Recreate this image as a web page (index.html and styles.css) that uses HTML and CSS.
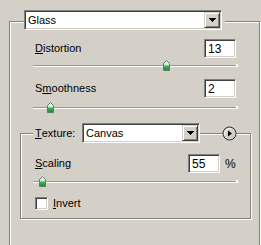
FILE: index.html
```html
<!DOCTYPE html>
<html>
<head>
<meta charset="utf-8">
<link rel="stylesheet" href="styles.css">
</head>
<body>
<div class="outer">
  <div class="legend-wrap">
    <div class="combo combo-glass">
      <span class="combo-text">Glass</span>
      <span class="combo-btn"><svg width="7" height="4" viewBox="0 0 7 4" shape-rendering="crispEdges"><path d="M0 0h7v1h-1v1h-1v1h-1v1h-1v-1h-1v-1h-1v-1h-1z" fill="#000"/></svg></span>
    </div>
  </div>

  <div class="row row-first">
    <span class="lbl"><u>D</u>istortion</span>
    <span class="field">13</span>
  </div>
  <div class="slider slider-1">
    <div class="track"></div>
    <svg class="thumb" style="left:130px" width="7" height="11" viewBox="0 0 7 11"><defs><linearGradient id="g1" x1="0" y1="0" x2="0" y2="1"><stop offset="0" stop-color="#f4fbf5"/><stop offset="0.45" stop-color="#cfe9d5"/><stop offset="0.55" stop-color="#3fae62"/><stop offset="1" stop-color="#1e8a44"/></linearGradient></defs><path d="M3.5 0.5L6.5 3.5V10.5H0.5V3.5Z" fill="url(#g1)" stroke="#5b7f66" stroke-width="1"/></svg>
  </div>

  <div class="row row-second">
    <span class="lbl">S<u>m</u>oothness</span>
    <span class="field">2</span>
  </div>
  <div class="slider slider-2">
    <div class="track"></div>
    <svg class="thumb" style="left:14px" width="7" height="11" viewBox="0 0 7 11"><defs><linearGradient id="g2" x1="0" y1="0" x2="0" y2="1"><stop offset="0" stop-color="#f4fbf5"/><stop offset="0.45" stop-color="#cfe9d5"/><stop offset="0.55" stop-color="#3fae62"/><stop offset="1" stop-color="#1e8a44"/></linearGradient></defs><path d="M3.5 0.5L6.5 3.5V10.5H0.5V3.5Z" fill="url(#g2)" stroke="#5b7f66" stroke-width="1"/></svg>
  </div>

  <div class="inner">
    <div class="inner-head">
      <span class="head-lbl"><u>T</u>exture:</span>
      <div class="combo combo-tex">
        <span class="combo-text">Canvas</span>
        <span class="combo-btn"><svg width="7" height="4" viewBox="0 0 7 4" shape-rendering="crispEdges"><path d="M0 0h7v1h-1v1h-1v1h-1v1h-1v-1h-1v-1h-1v-1h-1z" fill="#000"/></svg></span>
      </div>
      <span class="spacer"></span>
      <svg class="circle-btn" width="15" height="15" viewBox="0 0 15 15"><circle cx="7.5" cy="7.5" r="6.5" fill="#d4d0c8" stroke="#303030" stroke-width="1"/><path d="M3 9.5A5 5 0 0 1 9.5 3" fill="none" stroke="#ffffff" stroke-width="1"/><path d="M6 4.5L10 7.5L6 10.5Z" fill="#000"/></svg>
    </div>

    <div class="row row-scale">
      <span class="lbl"><u>S</u>caling</span>
      <span class="field field-scale">55</span>
      <span class="pct">%</span>
    </div>
    <div class="slider slider-3">
      <div class="track"></div>
      <svg class="thumb" style="left:6px" width="7" height="11" viewBox="0 0 7 11"><defs><linearGradient id="g3" x1="0" y1="0" x2="0" y2="1"><stop offset="0" stop-color="#f4fbf5"/><stop offset="0.45" stop-color="#cfe9d5"/><stop offset="0.55" stop-color="#3fae62"/><stop offset="1" stop-color="#1e8a44"/></linearGradient></defs><path d="M3.5 0.5L6.5 3.5V10.5H0.5V3.5Z" fill="url(#g3)" stroke="#5b7f66" stroke-width="1"/></svg>
    </div>

    <div class="check-row">
      <span class="checkbox"></span>
      <span class="lbl check-lbl"><u>I</u>nvert</span>
    </div>
  </div>
</div>
</body>
</html>
```
FILE: styles.css
```css
* { box-sizing: border-box; }

html, body {
  margin: 0;
  padding: 0;
}

body {
  width: 261px;
  height: 245px;
  overflow: hidden;
  background: #d4d0c8;
  font-family: "Liberation Sans", Arial, sans-serif;
  font-size: 11px;
  color: #000;
}

u { text-decoration: underline; text-underline-offset: 1px; }

.outer {
  margin: 21px 0 0 9px;
  width: 251px;
  height: 240px;
  border: 1px solid #808080;
  box-shadow: inset 1px 1px #fff, 1px 1px #fff;
}

.legend-wrap {
  display: flex;
  width: fit-content;
  margin: -12px 0 0 14px;
  padding-right: 3px;
  background: #d4d0c8;
}

.combo {
  display: flex;
  align-items: center;
  height: 20px;
  padding: 1px;
  background: #fff;
  border: 1px solid;
  border-color: #808080 #fff #fff #808080;
  box-shadow: inset 1px 1px #404040, inset -1px -1px #d4d0c8;
}

.combo-glass { width: 198px; }
.combo-tex { width: 118px; }

.combo-text {
  flex: 1;
  padding-left: 2px;
  line-height: 16px;
  white-space: nowrap;
}

.combo-btn {
  display: flex;
  align-items: center;
  justify-content: center;
  width: 16px;
  height: 16px;
  background: #d4d0c8;
  border: 1px solid;
  border-color: #d4d0c8 #404040 #404040 #d4d0c8;
  box-shadow: inset 1px 1px #fff, inset -1px -1px #808080;
}

.combo-btn svg { display: block; }

.row {
  display: flex;
  align-items: center;
  height: 19px;
}

.row-first {
  margin-top: 9px;
  padding-left: 25px;
}

.row-second {
  margin-top: 7px;
  padding-left: 25px;
}

.lbl { white-space: nowrap; line-height: 13px; }

.field {
  display: flex;
  align-items: center;
  width: 32px;
  height: 19px;
  margin-left: auto;
  margin-right: 23px;
  padding-left: 3px;
  background: #fff;
  border: 1px solid;
  border-color: #808080 #fff #fff #808080;
  box-shadow: inset 1px 1px #404040, inset -1px -1px #d4d0c8;
  font-size: 12px;
}

.slider {
  position: relative;
  width: 205px;
  height: 12px;
}

.slider-1 { margin: 2px 0 0 23px; }
.slider-2 { margin: 4px 0 0 23px; }
.slider-3 { margin: 3px 0 0 12px; }

.track {
  position: absolute;
  left: 0;
  right: 0;
  top: 5px;
  height: 2px;
  border-top: 1px solid #9a978f;
  border-bottom: 1px solid #fff;
}

.track::after {
  content: "";
  position: absolute;
  right: 0;
  top: -2px;
  width: 2px;
  height: 3px;
  background: #fff;
}

.thumb {
  position: absolute;
  top: 0;
  display: block;
}

.inner {
  margin: 19px 0 0 10px;
  width: 231px;
  height: 86px;
  border: 1px solid #808080;
  box-shadow: inset 1px 1px #fff, 1px 1px #fff;
}

.inner-head {
  display: flex;
  align-items: center;
  height: 20px;
  margin-top: -11px;
}

.head-lbl {
  display: flex;
  align-items: center;
  width: 49px;
  height: 20px;
  margin-left: 12px;
  padding-left: 2px;
  background: #d4d0c8;
}

.spacer { flex: 1; }

.circle-btn {
  display: block;
  margin-right: 13px;
}

.row-scale {
  margin-top: 11px;
  padding-left: 14px;
}

.field-scale { margin-right: 0; }

.pct {
  width: 10px;
  margin-left: 5px;
  margin-right: 15px;
  font-size: 12px;
}

.check-row {
  display: flex;
  align-items: center;
  margin-top: 9px;
  padding-left: 14px;
  height: 13px;
}

.checkbox {
  width: 13px;
  height: 13px;
  background: #fff;
  border: 1px solid;
  border-color: #808080 #fff #fff #808080;
  box-shadow: inset 1px 1px #404040, inset -1px -1px #d4d0c8;
}

.check-lbl { margin-left: 5px; }
```
